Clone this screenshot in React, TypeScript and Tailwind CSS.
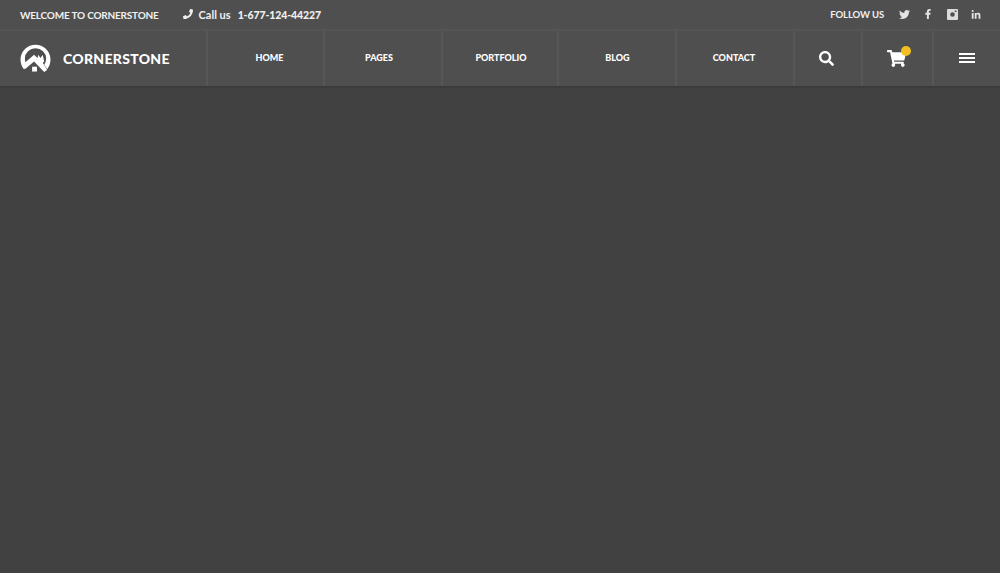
import { FaTwitter, FaFacebookF, FaLinkedinIn, FaSearch, FaShoppingCart, FaPhoneAlt } from "react-icons/fa";

const nav = [
  { label: "HOME", cls: "w-[117px] pl-[8px]" },
  { label: "PAGES", cls: "w-[118px] pr-[8px]" },
  { label: "PORTFOLIO", cls: "w-[116px] pl-[2px]" },
  { label: "BLOG", cls: "w-[118px] pl-[1px]" },
  { label: "CONTACT", cls: "w-[118px] pr-[2px]" },
];

function Logo() {
  return (
    <svg width="31" height="29" viewBox="0 0 32 30" className="shrink-0">
      <path d="M4 26 A15.500 15.500 0 1 1 28 26 L25 21.500 A11 11 0 0 0 27 15 A11 10.500 0 0 0 5 15 A11 11 0 0 0 7 21.500 Z" fill="#fff" />
      <path d="M2 22 L14.500 11 L18 14.500 L19 11 L21 14.500 L23.500 11.500 L25 18 L23.500 19.500 L28 27 L25 29 L14.500 18 L5 26 Z" fill="#fff" />
      <rect x="12.500" y="23.500" width="5" height="5" fill="#fff" />
    </svg>
  );
}

function InstagramSquare() {
  return (
    <svg width="11" height="11" viewBox="0 0 11 11" className="ml-[14px] shrink-0">
      <path d="M1 0H10A1 1 0 0 1 11 1V10A1 1 0 0 1 10 11H1A1 1 0 0 1 0 10V1A1 1 0 0 1 1 0ZM5.500 3.200A2.300 2.300 0 1 0 5.500 7.800A2.300 2.300 0 1 0 5.500 3.200ZM7.800 1.400V3H9.500V1.400Z" fill="#dcdcdc" fillRule="evenodd" />
    </svg>
  );
}

export default function App() {
  return (
    <div className="min-h-[573px] bg-[#414141] font-['Lato',sans-serif] text-white">
      <header className="bg-[#4f4f4f] shadow-[0_1px_2px_rgba(0,0,0,0.18)]">
        <div className="flex h-[31px] items-center justify-between border-b-2 border-[#555555] pl-5 pr-[19px] text-[10px] font-bold text-[#f0f0f0]">
          <div className="flex items-center">
            <span className="pt-[2px] tracking-[-0.2px]">WELCOME TO CORNERSTONE</span>
            <FaPhoneAlt className="mb-[2px] ml-[24px] -scale-x-100 text-[10px]" />
            <span className="ml-[6px] pt-[2px] text-[11px]">Call us</span>
            <span className="ml-[7px] pt-[2px] text-[10.500px] font-black tracking-[-0.1px]">1-677-124-44227</span>
          </div>
          <div className="flex items-center">
            <span className="pt-[2px] text-[9.500px] tracking-[-0.1px]">FOLLOW US</span>
            <FaTwitter className="ml-[15px] text-[11px] text-[#e4e4e4]" />
            <FaFacebookF className="mb-[2px] ml-[13px] text-[10px] text-[#e4e4e4]" />
            <InstagramSquare />
            <FaLinkedinIn className="ml-[13px] mt-[1px] text-[10px] text-[#e4e4e4]" />
          </div>
        </div>
        <div className="flex h-[55px] items-center">
          <div className="flex h-full w-[206px] items-center pl-[20px]">
            <Logo />
            <span className="ml-[12px] text-[14px] font-black tracking-[0.3px]">CORNERSTONE</span>
          </div>
          {nav.map((n) => (
            <div key={n.label} className={`flex h-full items-center justify-center border-l-2 border-[#575757] pb-[1px] text-[9px] font-black ${n.cls}`}>
              {n.label}
            </div>
          ))}
          <div className="flex h-full w-[68px] items-center justify-center border-l-2 border-[#575757] pr-[4px]">
            <FaSearch className="text-[15px]" />
          </div>
          <div className="relative flex h-full w-[71px] items-center justify-center border-l-2 border-[#575757] pr-[2px]">
            <FaShoppingCart className="text-[19px]" />
            <span className="absolute left-[38px] top-[15px] h-[10px] w-[10px] rounded-full bg-[#f2bf22]" />
          </div>
          <div className="flex h-full flex-1 items-center justify-center border-l-2 border-[#575757]">
            <div className="flex w-[16px] flex-col gap-[2px] pb-[1px]">
              <span className="h-[2px] bg-white" />
              <span className="h-[2px] bg-white" />
              <span className="h-[2px] bg-white" />
            </div>
          </div>
        </div>
      </header>
    </div>
  );
}
